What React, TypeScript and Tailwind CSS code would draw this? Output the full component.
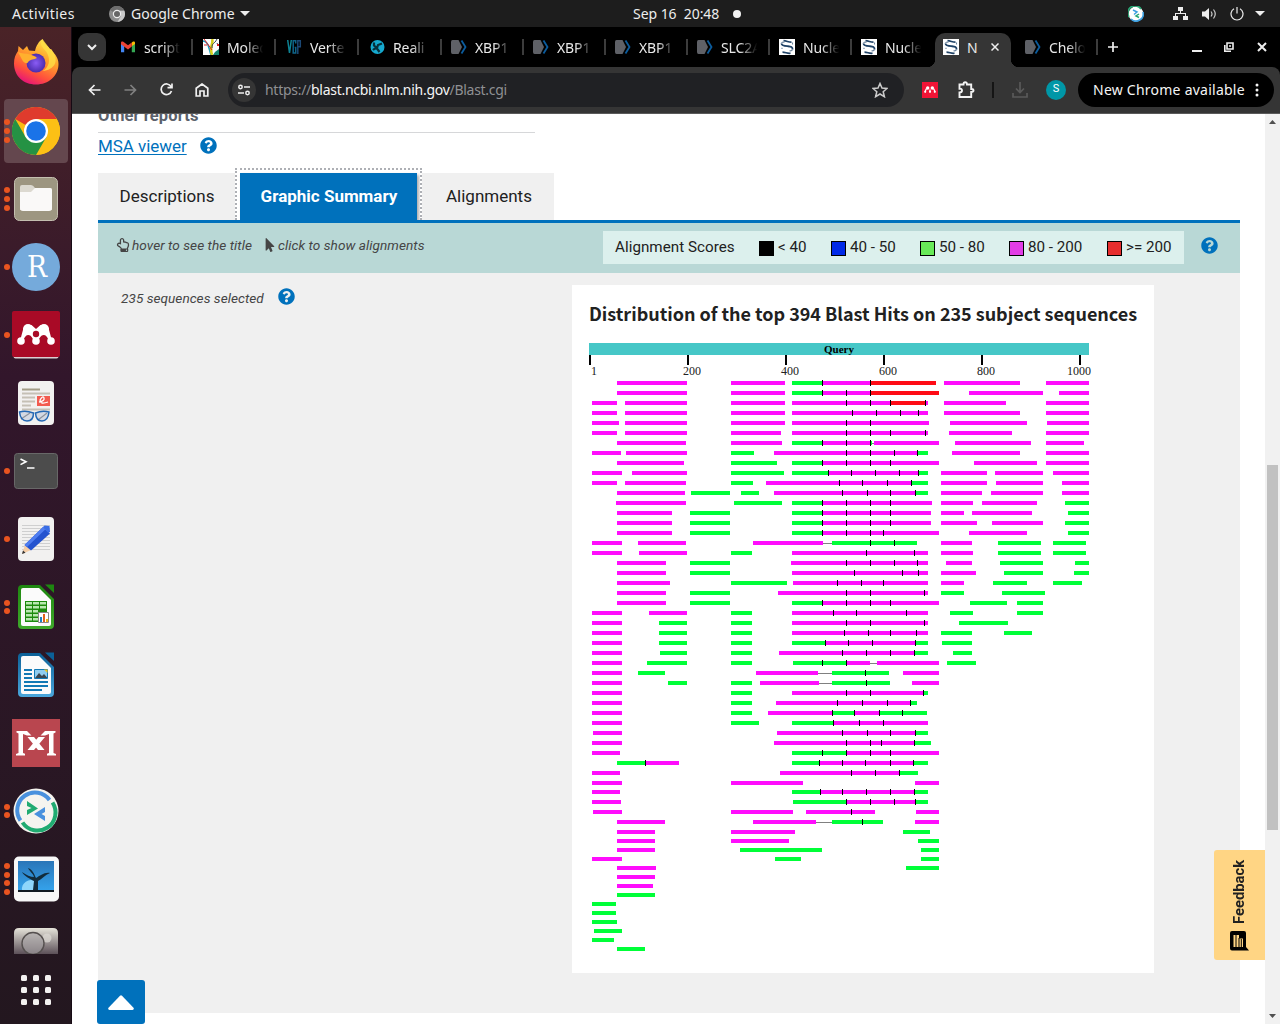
import React from "react";
import { FaQuestionCircle, FaRegHandPointUp, FaMousePointer } from "react-icons/fa";

/* ---------- Blast hits: m/g/r = coloured segment, l = gap line, t = tick ---------- */
const HITS: string[] = [
  "383 m617-687 m731-785 g792-822 m822-870 r870-936 m944-1020 m1046-1089 t822 t870",
  "393 m617-687 m731-785 g792-822 m822-870 r870-939 m969-1043 m1059-1089 t822 t846 t870",
  "403 m592-617 m625-687 m731-785 m792-890 r890-925 m925-928 m944-1006 m1046-1089 t846 t870 t890 t925",
  "413 m592-617 m625-687 m731-785 m792-928 m944-1020 m1046-1089 t852 t876 t900 t918",
  "423 m592-619 m625-687 m731-785 m792-929 m950-1027 m1047-1089 t846 t870",
  "433 m592-617 m625-687 m731-781 m792-928 m949-1012 m1046-1089 t846 t870 t890 t925",
  "443 m617-686 m731-782 g792-822 m822-870 g870-872 l872-874 m874-939 m955-1031 m1046-1084 t822 t846 t870",
  "453 m592-621 m626-687 g731-754 m774-917 g917-928 m952-1020 m1046-1089 t846 t870 t894 t917",
  "463 m617-684 g731-777 g792-822 m822-939 m974-1037 m1046-1089 t822 t846 t870 t890",
  "473 m592-622 m632-687 g731-784 g792-828 m828-918 g918-928 m941-987 m995-1043 m1053-1089 t828 t851 t875 t899 t918",
  "483 m592-617 m625-686 g731-753 m766-911 g911-928 m941-987 m996-1043 m1062-1089 t839 t862 t887 t911",
  "493 m617-685 g691-730 g741-759 m774-915 g915-928 m941-982 m991-1043 m1062-1089 t842 t867 t890 t915",
  "503 m616-686 g734-782 g792-822 m822-932 m941-973 m982-1037 g1065-1089 t822 t846 t870 t890",
  "513 m617-672 g690-730 g792-822 m822-931 m941-964 m972-1032 g1068-1089 t822 t846 t870 t890",
  "523 m617-672 g690-730 g792-822 m822-931 m941-977 m992-1043 g1065-1089 t822 t846 t870 t890",
  "533 m617-672 g690-730 g792-822 m822-939 m969-1027 g1068-1089 t822 t846 t870 t883",
  "543 m592-622 m638-686 m753-823 l823-832 g832-917 m941-972 g998-1041 g1053-1086 t870 t894",
  "553 m592-622 m639-687 g731-752 m792-928 m941-973 g998-1041 g1053-1086 t866 t914",
  "563 m617-666 g690-730 m791-928 m946-972 g1000-1043 g1075-1089 t846 t870 t894 t917",
  "573 m617-666 g690-730 m792-928 m941-976 g1004-1043 g1074-1089 t854 t902 t918",
  "583 m617-670 g731-787 m793-928 m941-964 g993-1027 g1053-1082 t837 t861 t883",
  "593 m617-666 g690-730 m778-928 g941-964 g1002-1045 t846 t870 t924",
  "603 m617-666 g690-730 g792-822 m822-939 g970-1007 g1017-1043 t822 t846 t870 t890",
  "613 m592-622 m649-687 g731-752 m792-928 g950-973 g1017-1043 t833 t856 t906",
  "623 m592-622 g659-687 g731-752 m792-928 g959-1008 t846 t870 t924",
  "633 m592-622 g659-687 g731-752 m792-928 g941-972 g1004-1032 t844 t868 t890 t916",
  "643 m592-622 g659-687 g731-752 g792-825 m825-915 g915-928 g942-972 t825 t848 t872 t915",
  "653 m592-622 g660-687 g731-752 m779-914 g914-928 g953-972 t842 t866 t890 t914",
  "663 m592-622 g647-687 g731-752 g793-846 m846-870 l870-877 m877-939 g947-976 t822 t846",
  "673 m592-622 g638-665 m756-818 l818-832 g832-889 m903-939 t865",
  "683 m592-622 g668-687 g731-752 m760-819 l819-832 g832-890 m912-939 t866",
  "693 m592-622 g731-752 m792-923 g923-928 t846 t870 t923",
  "703 m592-622 g731-752 m776-910 g910-917 t837 t862 t887 t910",
  "713 m592-622 g731-752 m768-832 g832-854 m854-879 g879-927 t832 t854 t879 t902",
  "723 m592-622 g731-759 g792-833 m833-928 t833 t859 t883",
  "733 m593-622 m777-915 g915-928 t842 t867 t890 t915",
  "743 m592-622 m774-914 g914-931 t846 t870 t881 t914",
  "753 m592-620 g792-846 m846-939 t822 t846 t870 t890",
  "763 g617-645 m645-679 g792-819 m819-913 g913-928 t645 t819 t842 t865 t890 t913",
  "773 m592-620 m780-899 g899-918 t851 t875 t899",
  "783 m592-622 m731-803 m915-939",
  "792 m592-620 g792-820 m820-914 g914-928 t820 t842 t866 t890 t914",
  "802 m592-621 g793-846 m846-915 g915-928 t846 t870 t894 t915",
  "812 m593-622 m731-793 m806-875 m916-939 t851",
  "822 m617-665 m753-816 l816-832 g832-883 m915-939 t862",
  "832 m617-655 m731-795 g903-930",
  "841 m617-655 m731-789 g918-939",
  "850 m617-655 g740-822 g921-939",
  "859 m592-622 g775-801 g921-939",
  "868 m617-656 g906-939",
  "877 m617-655",
  "886 m617-653",
  "895 g617-655",
  "904 g592-616",
  "913 g592-616",
  "922 g592-617",
  "931 g594-622",
  "940 g592-614",
  "949 g617-645",
];

const FILL: Record<string, string> = { m: "#ff0dfd", g: "#00ff38", r: "#ff0b16" };

function HitChart() {
  return (
    <svg width="510" height="615" viewBox="589 343 510 615" shapeRendering="crispEdges" className="block">
      <rect x="589" y="343" width="500" height="12" fill="#46c7c7" />
      <text x="839" y="353" textAnchor="middle" fontFamily="Liberation Serif, serif" fontWeight="700" fontSize="11">Query</text>
      {[589, 687, 785, 883, 981, 1079].map((x) => (
        <rect key={x} x={x} y="355" width="2" height="10" fill="#000" />
      ))}
      {([[591, "1"], [683, "200"], [781, "400"], [879, "600"], [977, "800"], [1067, "1000"]] as [number, string][]).map(([x, s]) => (
        <text key={s} x={x} y="375" fontFamily="Liberation Serif, serif" fontSize="12" fill="#212121">{s}</text>
      ))}
      {HITS.map((row) => {
        const [y0, ...parts] = row.split(" ");
        const y = Number(y0);
        return (
          <g key={row}>
            {parts.map((p) => {
              const kind = p[0];
              const [a, b] = p.slice(1).split("-").map(Number);
              if (kind === "t") return <rect key={p} x={a} y={y - 3} width="1" height="6" fill="#000" />;
              if (kind === "l") return <rect key={p} x={a} y={y} width={b - a} height="1" fill="#808080" />;
              return <rect key={p} x={a} y={y - 2} width={b - a} height="4" fill={FILL[kind]} />;
            })}
          </g>
        );
      })}
    </svg>
  );
}

/* ---------- Favicons ---------- */
const XIcon = () => (
  <svg width="16" height="16" viewBox="0 0 16 16">
    <path d="M1.500 1h6L11 8l-3.500 7h-6Q0 15 0 13V3Q0 1 1.500 1z" fill="#5f6167" />
    <path d="M10.500 1.500L14.500 8l-4 6.500" stroke="#0b5c9e" strokeWidth="1.800" fill="none" />
  </svg>
);
const NcbiIcon = () => (
  <svg width="16" height="16" viewBox="0 0 16 16">
    <path fill="#fff" d="M0 0h16v16H0z" />
    <path d="M2.500 4.500C2.800 7 6 7 9 7.200c3 .3 4.800.8 4.500 3.300" stroke="#1f4266" strokeWidth="1.900" fill="none" />
    <path d="M4.500 1.700c3 0 5 1.600 8 1.500M3.500 13.200c3 0 5 1.500 8 1" stroke="#1f4266" strokeWidth="1.700" fill="none" />
    <path d="M2.500 4.500C2.500 3 4 3 5.500 3.300M13.500 5.500V3.500M13.500 10.500c-.3 1.200-1.500 1.500-3 1.300M3 10v-1.300" stroke="#6b839c" strokeWidth="1.100" fill="none" />
  </svg>
);
const MoleIcon = () => (
  <svg width="16" height="16" viewBox="0 0 16 16">
    <path fill="#fff" d="M0 0h16v16H0z" />
    <path d="M0 2c3 0 5 3 6 7l2 7" stroke="#17a0c8" strokeWidth="1.600" fill="none" />
    <path d="M9 0c2 4-3 7 0 16" stroke="#d6cf1b" strokeWidth="2.600" fill="none" />
    <path d="M1 0l8 11M1 6h3" stroke="#d22" strokeWidth="1" fill="none" />
    <path d="M14 0c-3 6-5 3-5 9M14 4l1 2" stroke="#345" strokeWidth="1" fill="none" />
    <path d="M16 10l-4 3-2 3h6z" fill="#12856f" />
    <path d="M14 5h2v2h-2z" fill="#d22" />
  </svg>
);
const VgpIcon = () => (
  <svg width="16" height="16" viewBox="0 0 16 16" fill="none" strokeWidth="1.500">
    <path d="M1.700 1L3.500 14 5.300 1" stroke="#0d8394" />
    <path d="M9.700 4.500V1.700H7.200V14h2.500V8.500H8.700" stroke="#0f6489" />
    <path d="M11.800 15V1.700h2.500v6h-2.500" stroke="#1b4876" />
  </svg>
);
const RealiIcon = () => (
  <svg width="16" height="16" viewBox="0 0 16 16">
    <circle cx="8.500" cy="8" r="7" fill="#15a9cf" />
    <path d="M5 3.500v3l3 2.500 1-3 4-1.500M4 11q2-2 4-1.500l2.500 3.500" stroke="#06303c" strokeWidth="2.200" fill="none" />
  </svg>
);
const GmailIcon = () => (
  <svg width="16" height="16" viewBox="0 0 16 16">
    <path fill="#4285f4" d="M1 3.500v9.800h3.200V7z" />
    <path fill="#34a853" d="M15 3.500v9.800h-3.200V7z" />
    <path fill="#fbbc04" d="M15 4.500v-.8c0-1.400-1.500-1.500-2.300-.9l-.9.700v3.800L15 5z" />
    <path fill="#ea4335" d="M1 4.500v-.8c0-1.400 1.500-1.500 2.300-.9L8 6.300l3.800-2.800v4L8 10.500 1 5.200z" />
  </svg>
);

const TABS: { icon: () => React.ReactElement; label: string; w: string; active?: boolean }[] = [
  { icon: GmailIcon, label: "script", w: "w-[83px]" },
  { icon: MoleIcon, label: "Molec", w: "w-[83px]" },
  { icon: VgpIcon, label: "Verte", w: "w-[83px]" },
  { icon: RealiIcon, label: "Reali", w: "w-[82px]" },
  { icon: XIcon, label: "XBP1", w: "w-[82px]" },
  { icon: XIcon, label: "XBP1", w: "w-[82px]" },
  { icon: XIcon, label: "XBP1", w: "w-[82px]" },
  { icon: XIcon, label: "SLC2A", w: "w-[82px]" },
  { icon: NcbiIcon, label: "Nucle", w: "w-[82px]" },
  { icon: NcbiIcon, label: "Nucle", w: "w-[82px]" },
  { icon: NcbiIcon, label: "N", w: "w-[82px]", active: true },
  { icon: XIcon, label: "Chelo", w: "w-[82px]" },
];

const UI = "font-['Noto_Sans',sans-serif]";

/* ---------- Desktop top bar ---------- */
function TopBar() {
  return (
    <header className={`relative flex h-[27px] items-center bg-[#1d1d1d] text-[14px] text-[#ededed] ${UI}`}>
      <span className="w-[97px] pl-3 tracking-[0.45px]">Activities</span>
      <svg className="ml-3" width="16" height="16" viewBox="0 0 16 16">
        <circle cx="8" cy="8" r="8" fill="#8c8c8c" />
        <path d="M8 4.500h7.200A8 8 0 0 1 8.500 16L12 10z" fill="#c8c8c8" />
        <path d="M1 4a8 8 0 0 1 14 .5H8A3.500 3.500 0 0 0 5 6.500z" fill="#6d6d6d" />
        <circle cx="8" cy="8" r="3.600" fill="#666" stroke="#eee" strokeWidth="1.200" />
      </svg>
      <span className="ml-1.5 w-[104px] tracking-[0.02px] whitespace-nowrap">Google Chrome</span>
      <svg className="ml-[5px]" width="10" height="5" viewBox="0 0 10 5"><path d="M0 0h10L5 5z" fill="#ededed" /></svg>
      <span className="absolute left-[633px] tracking-[-0.05px] whitespace-pre">Sep 16  20:48</span>
      <span className="absolute left-[733px] size-2 rounded-full bg-[#f2f2f2]" />
      <div className="ml-auto flex items-center pr-[15px]">
        <svg width="16" height="16" viewBox="0 0 16 16">
          <circle cx="8" cy="8" r="7.500" fill="#fff" />
          <path d="M1 11A7.200 7.200 0 0 1 13 3" stroke="#2aa876" strokeWidth="1.700" fill="none" />
          <path d="M15 6A7.200 7.200 0 0 1 3 13" stroke="#3d9fe0" strokeWidth="1.700" fill="none" />
          <path d="M5 4l4 2-3 2.500" stroke="#3d9fe0" strokeWidth="1.500" fill="none" />
          <path d="M11 8l-3 2 3 1.500" stroke="#2aa876" strokeWidth="1.500" fill="none" />
        </svg>
        <svg className="ml-[29px]" width="15" height="14" viewBox="0 0 15 14" fill="#ededed">
          <path d="M5 0h5v4H5zM0 9h5v4H0zM10 9h5v4h-5zM7 4h1v2h5v3h-1V7H3v2H2V6h5z" />
        </svg>
        <svg className="ml-[14px]" width="15" height="14" viewBox="0 0 15 14">
          <path d="M0 4.500h3L7 1v12L3 9.500H0z" fill="#ededed" />
          <path d="M9 4.500q2 2.500 0 5M11.500 2.500q3.500 4.500 0 9" stroke="#ccc" strokeWidth="1.200" fill="none" />
        </svg>
        <svg className="ml-[13px]" width="14" height="14" viewBox="0 0 14 14" fill="none" stroke="#ededed" strokeWidth="1.200">
          <path d="M4 1.800a6 6 0 1 0 6 0M7 0v6.500" />
        </svg>
        <svg className="ml-[11px]" width="10" height="5" viewBox="0 0 10 5"><path d="M0 0h10L5 5z" fill="#ededed" /></svg>
      </div>
    </header>
  );
}

/* ---------- Dock ---------- */
const FirefoxIcon = () => (
  <svg width="48" height="48" viewBox="0 0 48 48">
    <defs>
      <linearGradient id="ff1" x1=".8" y1="0" x2=".3" y2="1">
        <stop offset="0" stopColor="#fff04f" /><stop offset=".4" stopColor="#ffa12b" /><stop offset=".75" stopColor="#ff4f3c" /><stop offset="1" stopColor="#e5127b" />
      </linearGradient>
      <radialGradient id="ff2"><stop offset="0" stopColor="#8a5cf5" /><stop offset="1" stopColor="#4b2cad" /></radialGradient>
    </defs>
    <path d="M30.500 0c1 4 4.500 6 7.500 10 2 0 2 1 2.500 2.500C45 17 46.500 21 46.500 25c0 12-10 20.500-22.500 20.500S2 37 2 24.500c0-5.500 1.500-9 4-12.500l.5-5 4.500 4 4-4 2 4.500 6 .5C24 7 27 2 30.500 0z" fill="url(#ff1)" />
    <circle cx="24" cy="24" r="9.500" fill="url(#ff2)" />
    <path d="M6 13c4 2 8 1 12 2.500 3 1 5.500 1.500 7 3.500-3 2-6 1-8.500 3.500-1 3-4 2-6-1z" fill="#ffb02e" />
    <path d="M30.500 0c-4 6 1 9 4 13 5 8 2 16-4 19 12-1 17-10 10-20L38 10z" fill="#ffe046" opacity=".8" />
  </svg>
);
const ChromeIcon = () => (
  <svg width="48" height="48" viewBox="0 0 48 48">
    <circle cx="24" cy="24" r="24" fill="#fbbc16" />
    <path d="M24 24L3.200 12A24 24 0 0 1 44.800 12z" fill="#df3b2d" />
    <path d="M24 12h20.800A24 24 0 0 1 24 48l10.400-18z" fill="#fcc015" />
    <path d="M13.600 30L3.200 12A24 24 0 0 0 24 48l10.400-18z" fill="#259244" />
    <circle cx="24" cy="24" r="12" fill="#fff" />
    <circle cx="24" cy="24" r="9.800" fill="#1a73e8" />
  </svg>
);
const FilesIcon = () => (
  <svg width="48" height="48" viewBox="0 0 48 48">
    <rect x="2.500" y="2.500" width="43" height="43" rx="5" fill="#9d9681" stroke="#c4bfb0" />
    <path d="M8 12q0-2 2-2h9q2 0 4 3h15q2 0 2 2v20H8z" fill="#dcd9d0" />
    <path d="M8 17h11l4-4h15q2 0 2 2v18q0 3-3 3H11q-3 0-3-3z" fill="#faf9f8" />
  </svg>
);
const RIcon = () => (
  <svg width="48" height="48" viewBox="0 0 48 48">
    <circle cx="24" cy="24" r="24" fill="#75aadb" />
    <text x="25" y="33.500" textAnchor="middle" fontFamily="DejaVu Serif, serif" fontSize="29" textLength="20" lengthAdjust="spacingAndGlyphs" fill="#fff">R</text>
  </svg>
);
const MendeleyIcon = () => (
  <svg width="48" height="48" viewBox="0 0 48 48">
    <rect x="1.500" y="4" width="45" height="43.500" rx="2" fill="#dccfd2" />
    <rect y="0" width="48" height="46" rx="2" fill="#a90a26" />
    <g fill="#fff">
      <circle cx="9" cy="30" r="3.800" /><circle cx="24" cy="30" r="3.800" /><circle cx="39" cy="30" r="3.800" />
      <circle cx="16" cy="18" r="5" /><circle cx="32" cy="18" r="5" />
      <path d="M11.500 17L8.500 28l3 1c1-3 2.500-5 5-5s3.500 3 5.500 5h4c2-2 3-5 5.500-5s4 2 5 5l3-1-3-11-8-3-4.500 4-4.500-4z" />
    </g>
    <circle cx="24" cy="23" r="3.200" fill="#a90a26" />
  </svg>
);
const EvinceIcon = () => (
  <svg width="48" height="48" viewBox="0 0 48 48">
    <rect x="6" y="2" width="36" height="44" rx="4" fill="#f2f1f0" />
    <path d="M10 10.500h18" stroke="#a39c87" strokeWidth="2" />
    <path d="M10 14.500h28M10 18.500h13M10 22.500h13M10 26.500h9M10 30.500h28" stroke="#c5c0b5" strokeWidth="2" />
    <rect x="25" y="17" width="13" height="10" fill="#f25b50" />
    <path d="M27 23q6-1 5-4t-4 2q0 5 8 2" stroke="#fff" strokeWidth="1.300" fill="none" />
    <path d="M9 40l9-6M26 41l9-7" stroke="#444" strokeWidth="1.200" />
    <g fill="#bfcadb" fillOpacity=".6" stroke="#2468b4" strokeWidth="1.500">
      <path d="M7.500 33q6-2 14 1 0 8-6.500 8t-7.500-9zM23.500 34q7-3 13.500-1-1 9-7 9t-6.500-8z" />
    </g>
  </svg>
);
const TermIcon = () => (
  <svg width="48" height="48" viewBox="0 0 48 48">
    <rect x="2.500" y="6.500" width="43" height="35" rx="3" fill="#4c4c4c" stroke="#686868" />
    <path d="M8.500 12l5.500 2.800-5.500 2.800" stroke="#fff" strokeWidth="1.600" fill="none" />
    <path d="M15 21h7.500" stroke="#fff" strokeWidth="1.500" />
  </svg>
);
const GeditIcon = () => (
  <svg width="48" height="48" viewBox="0 0 48 48">
    <rect x="6" y="2" width="36" height="44" rx="4" fill="#f2f1f0" />
    <path d="M10 10.500h28M10 13.500h28M10 16.500h28M10 19.500h28M10 22.500h28M10 25.500h28M10 28.500h28M10 31.500h28M10 34.500h28" stroke="#cfcfcf" />
    <path d="M10 39l3-9 6 5z" fill="#f5cda6" />
    <path d="M10 39l1-3.500 2.500 2.300z" fill="#333" />
    <path d="M12.500 30L31 12l7 6.500-19 17z" fill="#2453cf" />
    <path d="M12.500 30L31 12l2.500 2.300L15 32z" fill="#4f7df0" />
    <path d="M31 12l1.500-1.500 5 .5.500 5.500-1.500 1.800z" fill="#3a6de5" />
  </svg>
);
function OfficeIcon({ id, dark, light, children }: { id: string; dark: string; light: string; children: React.ReactNode }) {
  return (
    <svg width="48" height="48" viewBox="0 0 48 48">
      <defs><linearGradient id={id} x2="0" y2="1"><stop offset="0" stopColor={dark} /><stop offset="1" stopColor={light} /></linearGradient></defs>
      <path d="M9 2h19l14 14v26q0 4-4 4H10q-4 0-4-4V6q0-4 4-4z" fill={`url(#${id})`} />
      <path d="M33 1.500h9V10z" fill={dark} />
      <path d="M12 5h15l12 12v24q0 2-2 2H11q-2 0-2-2V7q0-2 2-2z" fill="#fbfbfb" />
      {children}
    </svg>
  );
}
const CalcIcon = () => (
  <OfficeIcon id="calc" dark="#1e8710" light="#3faa2b">
    <path d="M13 18h22v21H13z" fill="#1c8a0d" />
    <path d="M14 19h6v2.500h-6zM21 19h6v2.500h-6zM28 19h6v2.500h-6zM14 23h6v2.500h-6zM21 23h6v2.500h-6zM28 23h6v2.500h-6zM14 27h6v2.500h-6zM21 27h5v2.500h-5zM14 31h6v2.500h-6zM21 31h5v2.500h-5zM14 35h6v2.500h-6zM21 35h5v2.500h-5z" fill="#b9e8b0" />
    <path d="M26.500 29.500h10v10h-10z" fill="#fff" stroke="#888" />
    <path d="M28 34h2v5h-2z" fill="#1d84c4" /><path d="M31 31h2v8h-2z" fill="#e0621b" /><path d="M34 36h2v3h-2z" fill="#e9b913" />
  </OfficeIcon>
);
const WriterIcon = () => (
  <OfficeIcon id="writer" dark="#0b6097" light="#4aa7dc">
    <path d="M12 19h8M12 23h8M12 27h8M12 31h24M12 35h24M12 39h18" stroke="#1279b5" strokeWidth="1.800" />
    <path d="M22.500 18.500h13v9h-13z" fill="#8fcdf0" stroke="#1279b5" />
    <path d="M23 27l4-5 3 3 2-2 3.500 4z" fill="#3a4650" /><path d="M32 18.500h3.500V22z" fill="#f3c318" />
  </OfficeIcon>
);
const MxIcon = () => (
  <svg width="48" height="48" viewBox="0 0 48 48">
    <path fill="#b9464f" d="M0 0h48v48H0z" />
    <path d="M4.500 12H15l4.500 4.500H15L11 15v19l2 .8V36.500H4V35l2.500-1V14.500l-2-1zM43.500 12H33l-4.500 4.500H33l4-1.500v19l-2 .8v1.700h9V35l-2.500-1V14.500l2-1z" fill="#fff" />
    <path d="M15.500 18h6.500l10.500 13H26zM26.500 18H33L22 31h-6.500z" fill="#fff" />
  </svg>
);
const RemoteIcon = () => (
  <svg width="48" height="48" viewBox="0 0 48 48">
    <circle cx="24" cy="24" r="22.500" fill="#f5f4ef" />
    <g fill="none" strokeWidth="4">
      <path d="M8.500 33.500A17.500 17.500 0 0 1 37.500 13" stroke="#4991de" />
      <path d="M40.500 15.500A17.500 17.500 0 0 1 10.500 35.500" stroke="#20ab71" />
    </g>
    <path d="M15 14l11 7.500L15 28v-5l4.500-2-4.500-2z" fill="#20ab71" />
    <path d="M33 20l-11 7 11 7v-5l-3.500-2 3.500-2z" fill="#4991de" />
  </svg>
);
const TreeIcon = () => (
  <svg width="48" height="48" viewBox="0 0 48 48">
    <defs><linearGradient id="sky" x2="0" y2="1"><stop offset="0" stopColor="#2a75b8" /><stop offset="1" stopColor="#35a5ee" /></linearGradient></defs>
    <rect x="2" y="1.500" width="45" height="45" rx="5" fill="#f8f8f8" />
    <path d="M6 6h36v31H6z" fill="url(#sky)" />
    <path d="M10 35a9 9 0 0 1 13-9v9z" fill="#8ed6fb" />
    <path d="M21 35l1-9c-4-2-10-5-12-9 4 3 9 5 12 5-1-4-5-6-6-9 5 2 6 6 8 10 4-2 8-6 14-5-5 2-8 6-12 8v9z" fill="#122b3b" />
    <path d="M6 35h36v2H6z" fill="#111a22" />
  </svg>
);
const ImageIcon = () => (
  <svg width="48" height="27" viewBox="0 0 48 27">
    <defs><linearGradient id="cam" x2="0" y2="1"><stop offset="0" stopColor="#e6e4da" /><stop offset="1" stopColor="#5c5058" /></linearGradient></defs>
    <path d="M2 27V6q0-5 5-5h34q5 0 5 5v21z" fill="url(#cam)" />
    <circle cx="35" cy="11" r="4.500" fill="#dedcd6" opacity=".7" />
    <circle cx="21" cy="16.500" r="11" fill="#aaa6a8" fillOpacity=".6" stroke="#55504f" strokeWidth="1.400" />
  </svg>
);

const DOCK: { icon: () => React.ReactElement; dots: number; active?: boolean }[] = [
  { icon: FirefoxIcon, dots: 0 },
  { icon: ChromeIcon, dots: 3, active: true },
  { icon: FilesIcon, dots: 3 },
  { icon: RIcon, dots: 1 },
  { icon: MendeleyIcon, dots: 1 },
  { icon: EvinceIcon, dots: 0 },
  { icon: TermIcon, dots: 1 },
  { icon: GeditIcon, dots: 1 },
  { icon: CalcIcon, dots: 2 },
  { icon: WriterIcon, dots: 0 },
  { icon: MxIcon, dots: 0 },
  { icon: RemoteIcon, dots: 2 },
  { icon: TreeIcon, dots: 4 },
];

function Dock() {
  return (
    <nav className="flex w-[72px] shrink-0 flex-col border-r border-[#160a14] bg-linear-to-b from-[#4a2327] via-[#32162b] via-35% to-[#23171f] pt-0.5">
      {DOCK.map(({ icon: Icon, dots, active }, i) => (
        <div key={i} className="flex h-[68px] items-center pl-1">
          <div className={`flex h-16 w-16 items-center rounded ${active ? "bg-[#64474e]" : ""}`}>
            <div className="flex w-2 shrink-0 flex-col items-start gap-[2.700px]">
              {Array.from({ length: dots }, (_, d) => (
                <span key={d} className="size-[6px] rounded-full bg-[#e95420]" />
              ))}
            </div>
            <Icon />
          </div>
        </div>
      ))}
      <div className="flex h-[41px] items-end pl-3"><ImageIcon /></div>
      <div className="grid grid-cols-3 gap-[6px] self-start pt-[21px] pl-[21px]">
        {Array.from({ length: 9 }, (_, d) => (
          <span key={d} className="size-[6px] rounded-[1.500px] bg-[#f3f1f0]" />
        ))}
      </div>
    </nav>
  );
}

/* ---------- Browser chrome ---------- */
function TabStrip() {
  return (
    <div className={`flex h-10 items-center bg-black text-[14px] text-[#e8e8e8] ${UI}`}>
      <div className="ml-1.5 flex size-7 items-center justify-center rounded-[9px] bg-[#353535]">
        <svg width="10" height="7" viewBox="0 0 10 7"><path d="M1 1l4 4 4-4" stroke="#eee" strokeWidth="2" fill="none" /></svg>
      </div>
      <div className="flex h-10 pl-[6px]">
        {TABS.map(({ icon: Icon, label, w, active }, i) =>
          active ? (
            <div key={i} className={`relative flex h-10 shrink-0 items-center pl-2 ${w}`}>
              <div className="absolute top-1.5 left-0 h-[34px] w-[76px] rounded-t-[10px] bg-[#353535]" />
              <div className="absolute bottom-0 -left-[8px] size-2 bg-[radial-gradient(circle_at_0_0,#000_8px,#353535_8.500px)]" />
              <div className="absolute bottom-0 left-[76px] size-2 bg-[radial-gradient(circle_at_100%_0,#000_8px,#353535_8.500px)]" />
              <div className="relative flex items-center">
                <Icon />
                <span className="w-[32px] pl-2">{label}</span>
                <svg width="8" height="8" viewBox="0 0 8 8"><path d="M.5.5l7 7M7.500.5l-7 7" stroke="#eee" strokeWidth="1.500" /></svg>
              </div>
            </div>
          ) : (
            <div key={i} className={`flex h-10 shrink-0 items-center pl-2 ${w}`}>
              <Icon />
              <span className="ml-2 w-[37px] overflow-hidden mask-[linear-gradient(to_right,#000_50%,transparent_98%)] tracking-[-0.1px] whitespace-nowrap">{label}</span>
              {i !== 9 && <span className="ml-[10px] h-4 w-[1.500px] bg-[#3c3c3c]" />}
            </div>
          )
        )}
      </div>
      <svg className="ml-[9px]" width="10" height="10" viewBox="0 0 10 10"><path d="M5 0v10M0 5h10" stroke="#eee" strokeWidth="1.700" /></svg>
      <div className="ml-auto flex items-center pr-[13px]">
        <svg width="10" height="10" viewBox="0 0 10 10"><path d="M0 9h10" stroke="#eee" strokeWidth="2" /></svg>
        <svg className="ml-[22px]" width="10" height="10" viewBox="0 0 10 10" fill="none" stroke="#eee" strokeWidth="1.600"><path d="M3 1h6v6H3zM.8 3v6.200H7M5 4h2" /></svg>
        <svg className="ml-[23px]" width="10" height="10" viewBox="0 0 10 10"><path d="M1 1l8 8M9 1L1 9" stroke="#eee" strokeWidth="2" /></svg>
      </div>
    </div>
  );
}

function Toolbar() {
  return (
    <div className="bg-black">
      <div className={`flex h-[47px] items-center rounded-t-lg border-b border-[#5a5a5a] bg-[#353535] pb-px text-[14px] ${UI}`}>
        <svg className="ml-[16px]" width="13" height="12" viewBox="0 0 13 12" fill="none" stroke="#f0f0f0" strokeWidth="1.700"><path d="M12.500 6H1.500M6.500 1l-5 5 5 5" /></svg>
        <svg className="ml-[23px]" width="13" height="12" viewBox="0 0 13 12" fill="none" stroke="#808080" strokeWidth="1.700"><path d="M.5 6h11M6.500 1l5 5-5 5" /></svg>
        <svg className="ml-[22.500px]" width="13" height="13" viewBox="0 0 13 13" fill="none" stroke="#f0f0f0" strokeWidth="1.700"><path d="M11.500 8A5.300 5.300 0 1 1 11 3.500M12 .5v4.200H7.500" /></svg>
        <svg className="ml-[22.500px]" width="14" height="14" viewBox="0 0 14 14" fill="none" stroke="#f0f0f0" strokeWidth="1.700"><path d="M1.200 13V5.200L7 1l5.800 4.200V13H9V8H5v5z" /></svg>
        <div className="ml-[19px] flex h-[34px] w-[676px] shrink-0 items-center rounded-full bg-[#202124]">
          <div className="ml-1 flex size-6 items-center justify-center rounded-full bg-[#353535]">
            <svg width="12" height="12" viewBox="0 0 12 12" fill="none" stroke="#eee" strokeWidth="1.500">
              <circle cx="2.500" cy="3" r="1.700" /><path d="M6 3h6M0 9h6" /><circle cx="9.500" cy="9" r="1.700" />
            </svg>
          </div>
          <span className="ml-[9px] tracking-[-0.28px] text-[#8f9093]">https://<span className="text-[#f5f5f5]">blast.ncbi.nlm.nih.gov</span>/Blast.cgi</span>
          <svg className="mr-4 ml-auto" width="16" height="16" viewBox="0 0 16 16" fill="none" stroke="#ccc" strokeWidth="1.500"><path d="M8 1.500l2 4.600 5 .4-3.800 3.300 1.200 4.900L8 12l-4.400 2.700 1.200-4.900L1 6.500l5-.4z" /></svg>
        </div>
        <svg className="ml-[18px]" width="16" height="16" viewBox="0 0 16 16">
          <path fill="#f01436" d="M0 0h16v16H0z" />
          <path d="M3 9.500l1.500-3M13 9.500l-1.500-3M8 7.500v2" stroke="#fff" strokeWidth="1.300" />
          <g fill="#fff"><circle cx="5.700" cy="6" r="1.700" /><circle cx="10.300" cy="6" r="1.700" /><circle cx="3.200" cy="9.800" r="1.100" /><circle cx="8" cy="9.800" r="1.100" /><circle cx="12.800" cy="9.800" r="1.100" /></g>
        </svg>
        <svg className="ml-[19px]" width="18" height="18" viewBox="0 0 18 18" fill="none" stroke="#f3f3f3" strokeWidth="1.900"><path d="M2.500 3.500h4q0-2.300 1.700-2.300T10 3.500h4.200V8q2.300 0 2.300 1.500T14.200 11v5H2.500v-4.500Q5 11.500 5 9.500T2.500 7.700z" /></svg>
        <span className="ml-[17px] h-4 w-0.5 bg-[#151515]" />
        <svg className="ml-[18px]" width="16" height="16" viewBox="0 0 16 16" fill="none" stroke="#5a5a5a" strokeWidth="1.700"><path d="M8 0v10M4 6.500l4 4 4-4M1 11v4h14v-4" /></svg>
        <span className="ml-[18px] flex size-5 items-center justify-center rounded-full bg-[#0097a7] font-[Roboto,sans-serif] text-[11px] text-white">S</span>
        <div className="ml-3 flex h-[34px] w-[196px] items-center rounded-full bg-black pl-[15px] text-[#f5f5f5]">
          <span className="w-[153px] tracking-[0.24px] whitespace-nowrap">New Chrome available</span>
          <svg className="ml-[9px]" width="4" height="14" viewBox="0 0 4 14" fill="#f5f5f5"><circle cx="2" cy="2" r="1.500" /><circle cx="2" cy="7" r="1.500" /><circle cx="2" cy="12" r="1.500" /></svg>
        </div>
      </div>
    </div>
  );
}

/* ---------- Page ---------- */
const LEGEND = [
  { color: "bg-black", label: "< 40", w: "w-[72px]" },
  { color: "bg-[#0029e8]", label: "40 - 50", w: "w-[89px]" },
  { color: "bg-[#68ea58]", label: "50 - 80", w: "w-[89px]" },
  { color: "bg-[#e23de6]", label: "80 - 200", w: "w-[98px]" },
  { color: "bg-[#e62e2e]", label: ">= 200", w: "w-[66px]" },
];

function Page() {
  return (
    <main className="relative h-full min-w-0 flex-1 overflow-hidden bg-white pr-[25px] pl-[26px] font-[Roboto,sans-serif] text-[#212121]">
      <div className="flex h-[19px] w-[437px] items-end border-b border-[#d6d7d9]">
        <h2 className="mb-[6px] h-5 text-[16.500px] leading-5 font-bold tracking-[0.1px] text-[#5b616b]">Other reports</h2>
      </div>
      <div className="flex h-[27px] items-center text-[17px] text-[#0071bc]">
        <a className="w-[89px] tracking-[-0.05px] whitespace-nowrap underline underline-offset-2">MSA viewer</a>
        <FaQuestionCircle className="mb-[2px] ml-[12.500px] size-[17px]" />
      </div>
      <div className="mt-[12px] flex h-[48px] items-start text-[17px]">
        <div className="mt-[1px] flex h-[47px] w-[137px] items-center justify-center bg-[#f0f0f0] pt-[1px] pl-px">Descriptions</div>
        <div className="-mt-[4px] h-[52px] w-[187px] overflow-hidden border-x-2 border-t-2 border-dotted border-[#aeb0b5] bg-white pt-[3px] pl-[3px]">
          <div className="flex h-[47px] w-[177px] items-center justify-center bg-[#0071bc] pt-[1px] pl-px font-bold text-white shadow-[2px_2px_3px_#aaa]">Graphic Summary</div>
        </div>
        <div className="mt-[1px] flex h-[47px] w-[132px] items-center justify-center bg-[#f0f0f0] pt-[1px] pl-[2px]">Alignments</div>
      </div>
      <div className="h-[793px] border-t-[3px] border-[#0071bc] bg-[#f0f0f0]">
        <div className="flex h-[50px] items-start bg-[#b9d8d6]">
          <div className="flex items-center pt-[12px] pl-[18px] text-[13.600px] tracking-[0.05px] text-[#454545] italic">
            <FaRegHandPointUp className="size-[14px]" />
            <span className="ml-[2px] w-[121px] whitespace-nowrap">hover to see the title</span>
            <FaMousePointer className="ml-[12px] h-[14px] w-[10px]" />
            <span className="ml-[3px] whitespace-nowrap">click to show alignments</span>
          </div>
          <div className="mt-2 mr-[17px] ml-auto flex h-[33px] w-[581px] items-center bg-[#dcf0ed] pl-3 text-[15.200px]">
            <span className="w-[144px] tracking-[0.03px]">Alignment Scores</span>
            {LEGEND.map((l) => (
              <span key={l.label} className={`flex shrink-0 items-center whitespace-nowrap ${l.w}`}>
                <span className={`mt-[2px] mr-1 h-[15px] w-[15px] shrink-0 border border-black ${l.color}`} />
                {l.label}
              </span>
            ))}
          </div>
          <FaQuestionCircle className="mt-[14px] mr-[22px] size-[17px] text-[#0071bc]" />
        </div>
        <div className="flex justify-between pt-3 pr-[86px] pl-[23px]">
          <div className="flex h-[24px] items-center text-[13.600px] tracking-[0.03px] text-[#454545] italic">
            <span className="w-[144px] pt-[3px] whitespace-nowrap">235 sequences selected</span>
            <FaQuestionCircle className="mb-px ml-[13px] size-[17px] text-[#0071bc]" />
          </div>
          <section className="h-[688px] w-[582px] bg-white pt-[14px] pl-[17px]">
            <h3 className="h-[44px] font-['Noto_Sans_CJK_SC',sans-serif] text-[18px] leading-[28px] font-bold tracking-[-0.015px] whitespace-nowrap text-[#212121]">
              Distribution of the top 394 Blast Hits on 235 subject sequences
            </h3>
            <HitChart />
          </section>
        </div>
      </div>
      <a className="absolute bottom-0 left-[25px] flex h-11 w-12 items-center justify-center rounded-[3px] bg-[#0071bc]">
        <svg width="26" height="15" viewBox="0 0 26 15"><path d="M12 .7q1-1 2 0l11.500 12q1 2-1 2.300h-23q-2-.3-1-2.300z" fill="#fff" /></svg>
      </a>
      <div className="absolute right-0 bottom-[64px] flex h-[110px] w-[51px] flex-col items-center rounded-l-[3px] bg-[#ffd584]">
        <span className="mt-[8px] mr-[1px] h-[66px] rotate-180 text-[14.800px] leading-[20px] font-bold [writing-mode:vertical-rl]">Feedback</span>
        <svg className="mt-[7px] mr-[1px]" width="19" height="20" viewBox="0 0 19 20"><path d="M2 0h12q2 0 2 2v14l3 3.500H2q-2 0-2-2V2q0-2 2-2z" fill="#000" /><path d="M3.500 4H9v3.500h4V16H3.500z" fill="#ffd584" /><path d="M6 4v12M9 7v9M11.300 8v8" stroke="#000" strokeWidth="1" /></svg>
      </div>
    </main>
  );
}

function Scrollbar() {
  return (
    <div className="flex w-[15px] shrink-0 flex-col items-center justify-between bg-[#f1f1f1] pt-[6px] pb-[6px]">
      <svg width="7" height="4" viewBox="0 0 7 4"><path d="M0 4h7L3.500 0z" fill="#505050" /></svg>
      <div className="mt-[156px] h-[365px] w-[11px] bg-[#c1c1c1]" />
      <svg width="7" height="4" viewBox="0 0 7 4"><path d="M0 0h7L3.500 4z" fill="#505050" /></svg>
    </div>
  );
}

export default function App() {
  return (
    <div className="flex h-[1024px] w-[1280px] flex-col overflow-hidden bg-black">
      <TopBar />
      <div className="flex min-h-0 flex-1">
        <Dock />
        <div className="flex min-w-0 flex-1 flex-col">
          <TabStrip />
          <Toolbar />
          <div className="flex min-h-0 flex-1">
            <Page />
            <Scrollbar />
          </div>
        </div>
      </div>
    </div>
  );
}
